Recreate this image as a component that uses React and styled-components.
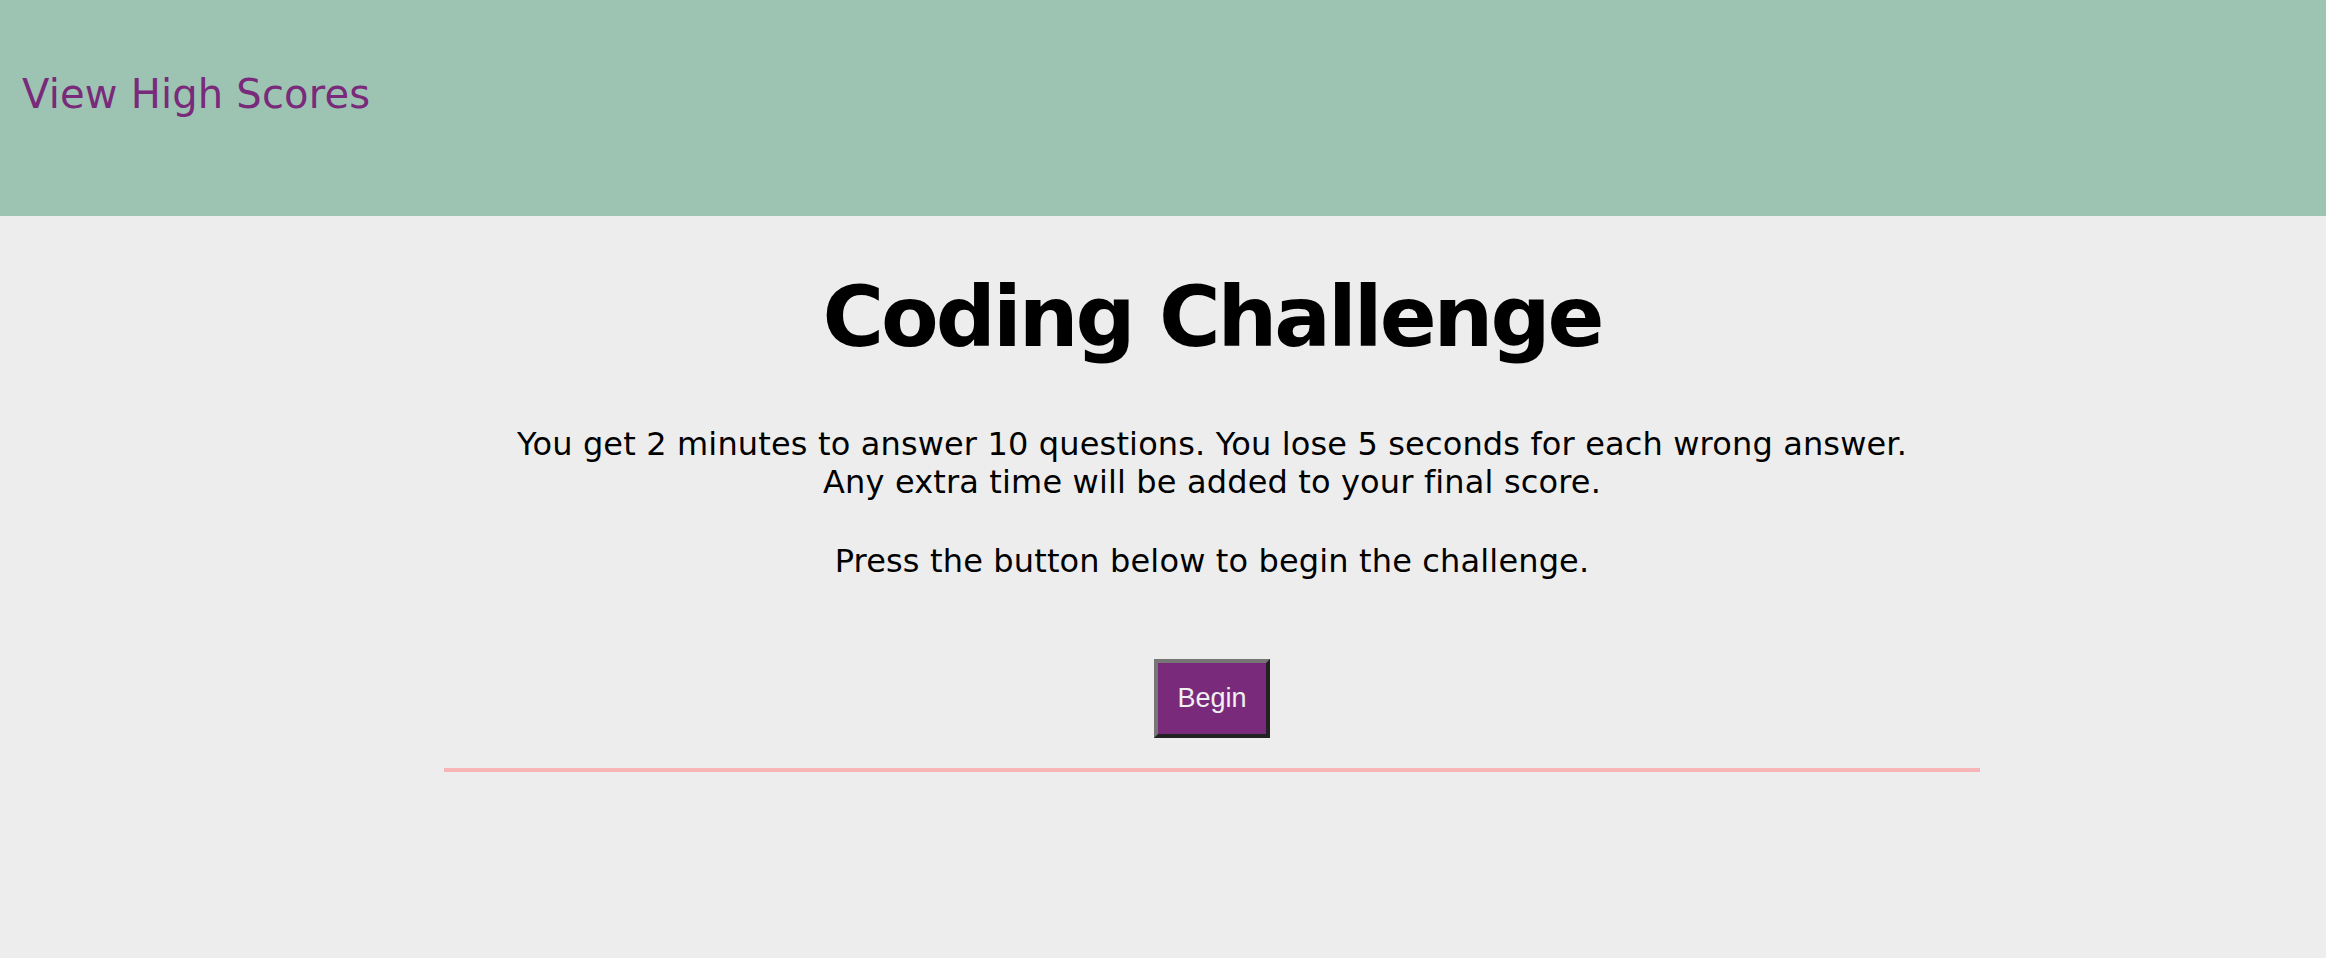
import styled, { createGlobalStyle } from "styled-components";

const GlobalStyle = createGlobalStyle`
  html, body {
    margin: 0;
    padding: 0;
    background: #ededed;
    font-family: "DejaVu Sans", Verdana, sans-serif;
  }
`;

const App = () => (
  <>
    <GlobalStyle />
    <Header>
      <ScoresLink href="#">View High Scores</ScoresLink>
    </Header>
    <Main>
      <Content>
        <Title>Coding Challenge</Title>
        <Intro>
          You get 2 minutes to answer 10 questions. You lose 5 seconds for each
          wrong answer.
          <br />
          Any extra time will be added to your final score.
        </Intro>
        <Intro>Press the button below to begin the challenge.</Intro>
        <BeginButton>Begin</BeginButton>
        <Divider />
      </Content>
    </Main>
  </>
);

const Header = styled.header`
  height: 216px;
  background-color: #9dc4b2;
  padding: 71px 0 0 22px;
  box-sizing: border-box;
`;

const ScoresLink = styled.a`
  font-size: 40px;
  letter-spacing: 0.2px;
  color: #792a7a;
  text-decoration: none;
`;

const Main = styled.main`
  display: flex;
  justify-content: flex-start;
  padding-left: 444px;
`;

const Content = styled.section`
  width: 1536px;
  display: flex;
  flex-direction: column;
  align-items: center;
  text-align: center;
`;

const Title = styled.h1`
  font-size: 84px;
  font-weight: bold;
  letter-spacing: -3px;
  margin: 52px 0 0;
  color: #000;
`;

const Intro = styled.p`
  font-size: 32px;
  letter-spacing: 0.15px;
  margin: 59px 0 0;
  color: #000;

  & + & {
    margin-top: 41px;
  }
`;

const BeginButton = styled.button`
  margin-top: 79px;
  width: 116px;
  height: 79px;
  background-color: #792a7a;
  color: #f0f0f0;
  font-family: "Liberation Sans", Arial, sans-serif;
  font-size: 27px;
  border: 4px solid;
  border-color: #767676 #222 #222 #767676;
  box-sizing: border-box;
  cursor: pointer;
`;

const Divider = styled.hr`
  width: 100%;
  height: 4px;
  margin: 30px 0 0;
  border: none;
  background-color: #f8b5b8;
`;

export default App;
